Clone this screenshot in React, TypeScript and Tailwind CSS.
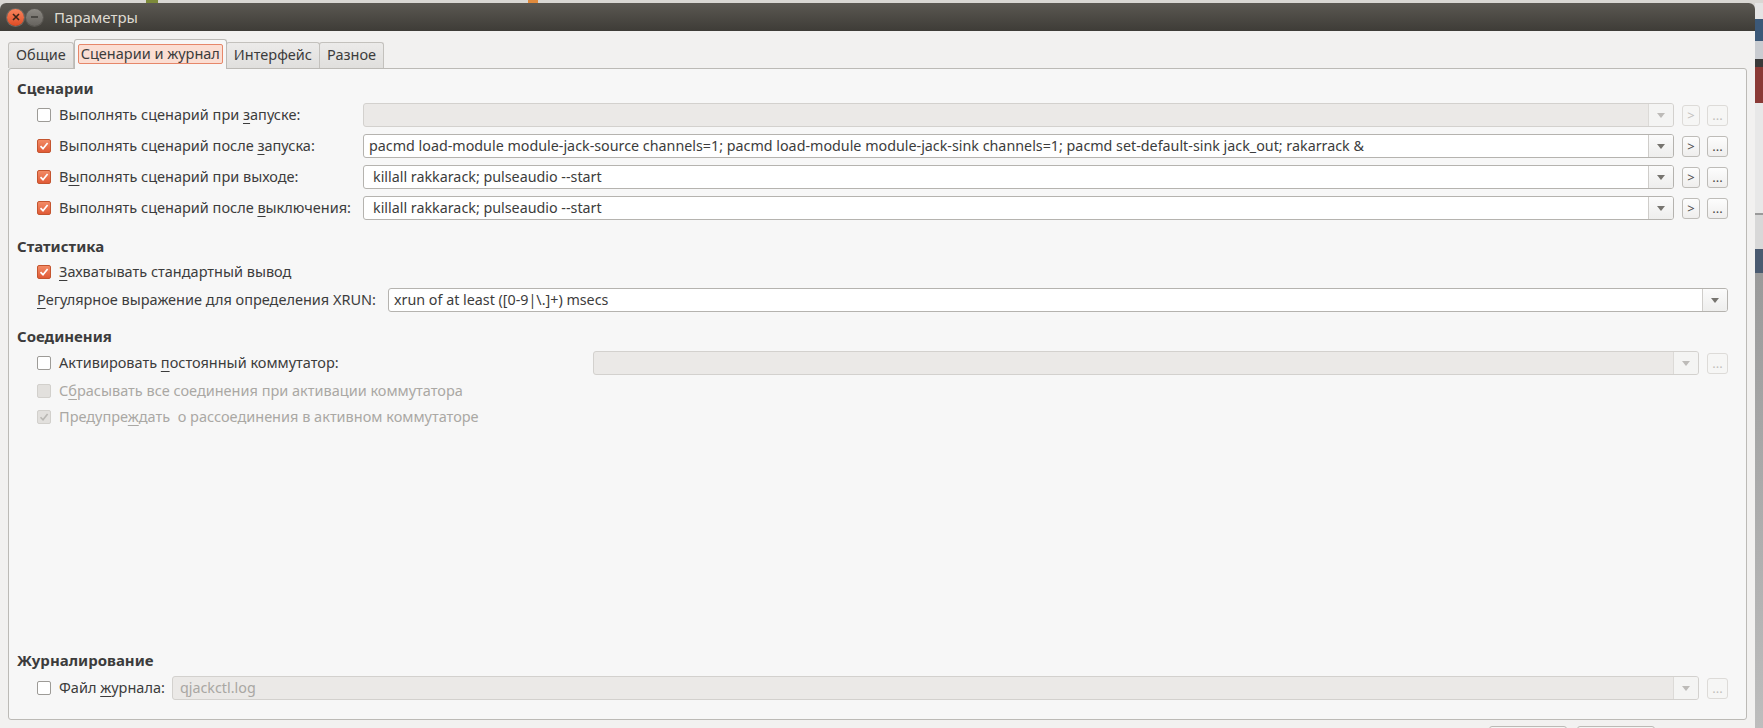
import React from "react";

// Диалог "Параметры" (QjackCtl) в теме Ambiance

function Mn({ text, className }: { text: string; className?: string }) {
  const i = text.indexOf("&");
  if (i < 0) return <span className={className}>{text}</span>;
  return (
    <span className={className}>
      {text.slice(0, i)}
      <span className="underline decoration-[1px] underline-offset-[3px]">{text[i + 1]}</span>
      {text.slice(i + 2)}
    </span>
  );
}

function Check({ checked, disabled }: { checked?: boolean; disabled?: boolean }) {
  if (disabled) {
    return (
      <span className="flex h-[14px] w-[14px] shrink-0 items-center justify-center rounded-[2px] border border-[#d2d0cc] bg-[#e2e0dd]">
        {checked && (
          <svg width="10" height="10" viewBox="0 0 10 10">
            <path d="M1.5 5.2 L4 7.7 L8.6 2" fill="none" stroke="#b9b7b3" strokeWidth="1.6" />
          </svg>
        )}
      </span>
    );
  }
  if (checked) {
    return (
      <span className="flex h-[14px] w-[14px] shrink-0 items-center justify-center rounded-[2px] border border-[#c4552f] bg-gradient-to-b from-[#f28b66] to-[#e05a36]">
        <svg width="10" height="10" viewBox="0 0 10 10">
          <path d="M1.5 5.2 L4 7.7 L8.6 2" fill="none" stroke="#ffffff" strokeWidth="1.7" />
        </svg>
      </span>
    );
  }
  return <span className="h-[14px] w-[14px] shrink-0 rounded-[2px] border border-[#9d9b97] bg-white" />;
}

function Arrow({ disabled }: { disabled?: boolean }) {
  return (
    <svg width="8" height="5" viewBox="0 0 8 5">
      <path d="M0 0 H8 L4 5 Z" fill={disabled ? "#bdbbb8" : "#76746f"} />
    </svg>
  );
}

function Combo({
  value,
  disabled,
  pad = "pl-[9px]",
}: {
  value?: string;
  disabled?: boolean;
  pad?: string;
}) {
  return (
    <div
      className={`flex h-[24px] min-w-0 flex-1 overflow-hidden rounded-[3px] border ${
        disabled ? "border-[#d3d1ce] bg-[#ebe9e7]" : "border-[#b5b3af] bg-white"
      }`}
    >
      <div
        className={`flex min-w-0 flex-1 items-center whitespace-nowrap text-[14.3px] ${pad} ${
          disabled ? "text-[#a9a7a3]" : "text-[#3c3c3c]"
        }`}
      >
        {value}
      </div>
      <div
        className={`flex w-[25px] shrink-0 items-center justify-center border-l ${
          disabled ? "border-[#dcdad7] bg-[#f4f4f3]" : "border-[#cfcdca] bg-gradient-to-b from-[#fbfbfb] to-[#eeeeed]"
        }`}
      >
        <Arrow disabled={disabled} />
      </div>
    </div>
  );
}

function ToolBtn({ label, disabled, wide }: { label: string; disabled?: boolean; wide?: boolean }) {
  return (
    <div
      className={`flex h-[21px] shrink-0 items-center justify-center rounded-[3px] border text-[13px] leading-none ${
        wide ? "w-[21px]" : "w-[18px]"
      } ${
        disabled
          ? "border-[#dddbd8] bg-[#f6f6f5] text-[#c2c0bc]"
          : "border-[#bebcb8] bg-gradient-to-b from-[#fdfdfd] to-[#efeeed] text-[#4a4a4a]"
      }`}
    >
      {label}
    </div>
  );
}

function Section({ title }: { title: string }) {
  return <div className="flex h-[20px] items-center text-[15px] font-bold text-[#3c3c3c]">{title}</div>;
}

const scripts = [
  { label: "Выполнять сценарий при &запуске:", checked: false, value: "", pad: "pl-[9px]" },
  {
    label: "Выполнять сценарий после &запуска:",
    checked: true,
    value:
      "pacmd load-module module-jack-source channels=1; pacmd load-module module-jack-sink channels=1; pacmd set-default-sink jack_out; rakarrack &",
    pad: "pl-[5px]",
  },
  { label: "В&ыполнять сценарий при выходе:", checked: true, value: "killall rakkarack; pulseaudio --start", pad: "pl-[9px]" },
  { label: "Выполнять сценарий после &выключения:", checked: true, value: "killall rakkarack; pulseaudio --start", pad: "pl-[9px]" },
];

const tabs = ["Общие", "Сценарии и журнал", "Интерфейс", "Разное"];

export default function App() {
  return (
    <div className="flex h-[728px] w-[1763px] flex-col overflow-hidden bg-[#d8d6d2] font-['Noto_Sans',sans-serif] text-[14.5px] text-[#3c3c3c]">
      {/* полоска рабочего стола сверху */}
      <div className="flex h-[3px] shrink-0 bg-[#d9d7d3]">
        <div className="ml-[146px] h-[3px] w-[12px] bg-[#7d8a3a]" />
        <div className="ml-[370px] h-[3px] w-[10px] bg-[#e08a3c]" />
      </div>

      <div className="flex min-h-0 flex-1">
        {/* окно */}
        <div className="flex w-[1755px] shrink-0 flex-col overflow-hidden rounded-t-[6px] bg-[#f2f1f0]">
          {/* заголовок */}
          <div className="flex h-[28px] shrink-0 items-center bg-gradient-to-b from-[#5b5852] to-[#3e3c37] pl-[7px]">
            <div className="flex h-[17px] w-[17px] items-center justify-center rounded-full bg-gradient-to-b from-[#f7845c] to-[#df4a22] shadow-[0_0_0_1px_#6e6a64]">
              <svg width="8" height="8" viewBox="0 0 8 8">
                <path d="M1 1 L7 7 M7 1 L1 7" stroke="#3a2418" strokeWidth="1.6" />
              </svg>
            </div>
            <div className="ml-[2px] flex h-[17px] w-[17px] items-center justify-center rounded-full bg-gradient-to-b from-[#8d8a84] to-[#66635e] shadow-[0_0_0_1px_#5a5752]">
              <div className="h-[2px] w-[7px] bg-[#4b4944]" />
            </div>
            <div className="ml-[11px] text-[15px] text-[#dfdbd2]">Параметры</div>
          </div>

          {/* вкладки */}
          <div className="flex h-[37px] shrink-0 items-end pl-[8px] pt-[8px]">
            {tabs.map((t, i) =>
              i === 1 ? (
                <div
                  key={t}
                  className="relative z-10 -mb-px flex h-[30px] items-center rounded-t-[3px] border border-b-0 border-[#bcbab6] bg-[#f7f7f7] px-[3px] pb-[2px]"
                >
                  <div className="flex h-[20px] items-center rounded-[2px] border border-[#e6876a] bg-[#fbded3] px-[2px]">
                    {t}
                  </div>
                </div>
              ) : (
                <div
                  key={t}
                  className={`flex h-[26px] items-center rounded-t-[3px] border border-b-0 border-[#c3c1bd] bg-gradient-to-b from-[#ecebea] to-[#e0dfdd] px-[7px] pb-[1px] ${
                    i === 0 ? "" : "-ml-px"
                  }`}
                >
                  {t}
                </div>
              )
            )}
          </div>

          {/* панель */}
          <div className="mx-[8px] flex h-[652px] shrink-0 flex-col rounded-[3px] border border-[#bcbab6] bg-[#f7f7f7] pb-[19px] pl-[8px] pr-[18px] pt-[9px]">
            <Section title="Сценарии" />
            <div className="mt-[5px] flex flex-col gap-[7px]">
              {scripts.map((s, i) => (
                <div key={i} className="flex h-[24px] items-center">
                  <div className="ml-[20px] flex w-[326px] shrink-0 items-center gap-[8px]">
                    <Check checked={s.checked} />
                    <Mn text={s.label} className="whitespace-nowrap" />
                  </div>
                  <Combo value={s.value} disabled={!s.checked} pad={s.pad} />
                  <div className="ml-[8px] flex items-center gap-[7px]">
                    <ToolBtn label=">" disabled={!s.checked} />
                    <ToolBtn label="..." disabled={!s.checked} wide />
                  </div>
                </div>
              ))}
            </div>

            <div className="mt-[16px]">
              <Section title="Статистика" />
            </div>
            <div className="ml-[20px] mt-[6px] flex h-[20px] items-center gap-[8px]">
              <Check checked />
              <Mn text="&Захватывать стандартный вывод" />
            </div>
            <div className="mt-[6px] flex h-[24px] items-center">
              <div className="ml-[20px] w-[351px] shrink-0 whitespace-nowrap">
                <Mn text="&Регулярное выражение для определения XRUN:" />
              </div>
              <Combo value="xrun of at least ([0-9|\.]+) msecs" pad="pl-[5px]" />
            </div>

            <div className="mt-[14px]">
              <Section title="Соединения" />
            </div>
            <div className="mt-[5px] flex h-[24px] items-center">
              <div className="ml-[20px] flex w-[556px] shrink-0 items-center gap-[8px]">
                <Check />
                <Mn text="Активировать &постоянный коммутатор:" />
              </div>
              <Combo disabled />
              <div className="ml-[8px]">
                <ToolBtn label="..." disabled wide />
              </div>
            </div>
            <div className="ml-[20px] mt-[6px] flex h-[20px] items-center gap-[8px] text-[#aaa8a4]">
              <Check disabled />
              <Mn text="С&брасывать все соединения при активации коммутатора" />
            </div>
            <div className="ml-[20px] mt-[6px] flex h-[20px] items-center gap-[8px] text-[#aaa8a4]">
              <Check checked disabled />
              <Mn text="Предупре&ждать  о рассоединения в активном коммутаторе" className="whitespace-pre" />
            </div>

            <div className="flex-1" />

            <Section title="Журналирование" />
            <div className="mt-[6px] flex h-[24px] items-center">
              <div className="ml-[20px] flex w-[135px] shrink-0 items-center gap-[8px]">
                <Check />
                <Mn text="Файл &журнала:" />
              </div>
              <Combo value="qjackctl.log" disabled pad="pl-[7px]" />
              <div className="ml-[8px]">
                <ToolBtn label="..." disabled wide />
              </div>
            </div>
          </div>

          {/* кнопки диалога, обрезанные снизу */}
          <div className="mt-[6px] flex justify-end gap-[10px] pr-[100px]">
            <div className="h-[26px] w-[78px] rounded-[3px] border border-[#bcbab6] bg-[#f5f5f4]" />
            <div className="h-[26px] w-[78px] rounded-[3px] border border-[#bcbab6] bg-[#f5f5f4]" />
          </div>
        </div>

        {/* край рабочего стола справа */}
        <div className="flex w-[8px] shrink-0 flex-col">
          <div className="h-[16px] bg-[#e4e4e4]" />
          <div className="h-[22px] bg-[#3b5878]" />
          <div className="h-[18px] bg-[#c9ccd1]" />
          <div className="h-[8px] bg-[#3a3a3a]" />
          <div className="h-[36px] bg-[#8a3a36]" />
          <div className="h-[110px] bg-[#e8e8e8]" />
          <div className="h-[2px] bg-[#9a9a9a]" />
          <div className="h-[34px] bg-[#d8d8d8]" />
          <div className="h-[24px] bg-[#4a5a70]" />
          <div className="flex-1 bg-gradient-to-b from-[#9a9a9a] to-[#bdbdbd]" />
        </div>
      </div>
    </div>
  );
}
